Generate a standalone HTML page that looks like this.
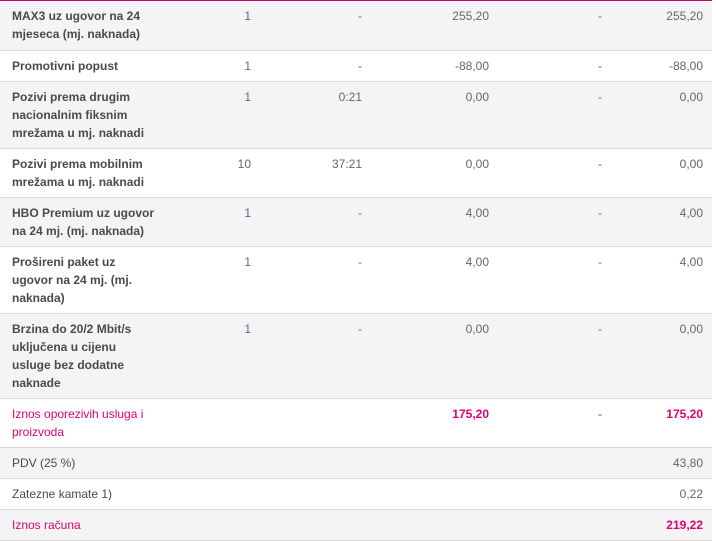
<!DOCTYPE html>
<html><head><meta charset="utf-8"><style>
body{margin:0;width:716px;height:540px;overflow:hidden;background:#fff;font-family:"Liberation Sans",Arial,sans-serif;font-size:12px;}
table{border-collapse:collapse;width:712px;table-layout:fixed;border-top:1px solid #c5006a;}
td{vertical-align:top;padding:6px 0 0 0;line-height:18px;color:#666;border-bottom:1px solid #dcdcdc;}
tr.g td{background:#f4f4f4;}
td.n{padding-left:12px;padding-right:9px;font-weight:bold;color:#4a4a4a;}
td.r{text-align:right;}
td.q{color:#4f6b8c;}
.m td{color:#e20074;}
.m td.b{font-weight:bold;}
</style></head><body>
<table>
<colgroup><col style="width:164px"><col style="width:87px"><col style="width:111px"><col style="width:127px"><col style="width:113px"><col style="width:101px"><col style="width:9px"></colgroup>
<tr class="g" style="height:50px"><td class="n">MAX3 uz ugovor na 24 mjeseca (mj. naknada)</td><td class="r q">1</td><td class="r">-</td><td class="r">255,20</td><td class="r">-</td><td class="r">255,20</td><td></td></tr>
<tr style="height:31px"><td class="n">Promotivni popust</td><td class="r q">1</td><td class="r">-</td><td class="r">-88,00</td><td class="r">-</td><td class="r">-88,00</td><td></td></tr>
<tr class="g" style="height:67px"><td class="n">Pozivi prema drugim nacionalnim fiksnim mrežama u mj. naknadi</td><td class="r q">1</td><td class="r">0:21</td><td class="r">0,00</td><td class="r">-</td><td class="r">0,00</td><td></td></tr>
<tr style="height:49px"><td class="n">Pozivi prema mobilnim mrežama u mj. naknadi</td><td class="r">10</td><td class="r">37:21</td><td class="r">0,00</td><td class="r">-</td><td class="r">0,00</td><td></td></tr>
<tr class="g" style="height:49px"><td class="n">HBO Premium uz ugovor na 24 mj. (mj. naknada)</td><td class="r q">1</td><td class="r">-</td><td class="r">4,00</td><td class="r">-</td><td class="r">4,00</td><td></td></tr>
<tr style="height:67px"><td class="n">Prošireni paket uz<br>ugovor na 24 mj. (mj.<br>naknada)</td><td class="r q">1</td><td class="r">-</td><td class="r">4,00</td><td class="r">-</td><td class="r">4,00</td><td></td></tr>
<tr class="g" style="height:85px"><td class="n">Brzina do 20/2 Mbit/s<br>uključena u cijenu<br>usluge bez dodatne<br>naknade</td><td class="r q">1</td><td class="r">-</td><td class="r">0,00</td><td class="r">-</td><td class="r">0,00</td><td></td></tr>
<tr class="m" style="height:49px"><td class="n" style="color:#e20074;font-weight:normal">Iznos oporezivih usluga i<br>proizvoda</td><td></td><td></td><td class="r b">175,20</td><td class="r">-</td><td class="r b">175,20</td><td></td></tr>
<tr class="g" style="height:31px"><td class="n" style="font-weight:normal">PDV (25 %)</td><td></td><td></td><td></td><td></td><td class="r">43,80</td><td></td></tr>
<tr style="height:31px"><td class="n" style="font-weight:normal">Zatezne kamate 1)</td><td></td><td></td><td></td><td></td><td class="r">0,22</td><td></td></tr>
<tr class="g m" style="height:31px"><td class="n" style="color:#e20074;font-weight:normal">Iznos računa</td><td></td><td></td><td></td><td></td><td class="r b">219,22</td><td></td></tr>
</table>
</body></html>
